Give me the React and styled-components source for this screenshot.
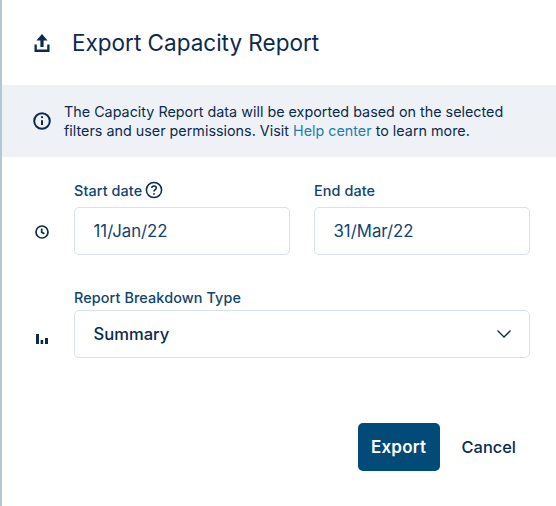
import React from "react";
import styled, { createGlobalStyle } from "styled-components";

const Global = createGlobalStyle`
  html, body { margin: 0; padding: 0; background: #fff; }
  body { font-family: Inter, "Liberation Sans", sans-serif; -webkit-font-smoothing: antialiased; }
`;

const Dialog = styled.div`
  width: 556px; height: 506px; box-sizing: border-box; overflow: hidden;
  background: #fff; border-left: 2px solid #b6c5d3;
  display: flex; flex-direction: column;
`;
const Header = styled.header`
  height: 85px; display: flex; align-items: center; gap: 21px; padding-left: 31px; box-sizing: border-box;
`;
const Title = styled.h1`
  margin: 0; font-size: 22.5px; font-weight: 400; color: #0d2a4d; letter-spacing: 0; line-height: 30px;
`;
const Banner = styled.div`
  height: 72px; background: #eef2f7; display: flex; align-items: center; gap: 12px; padding-left: 30px; box-sizing: border-box;
`;
const BannerText = styled.p`
  margin: 0; font-size: 14.35px; line-height: 19px; color: #0d2a4d; width: 480px;
`;
const HelpLink = styled.a`
  color: #1a7fb0; text-decoration: none;
`;
const Form = styled.div`
  display: flex; flex-direction: column; padding: 23px 0 0 30px; gap: 32px;
`;
const Row = styled.div`
  display: flex; align-items: flex-end; gap: 22px;
`;
const IconCell = styled.div`
  width: 20px; height: 47px; flex: none; display: flex; align-items: center; justify-content: center;
  padding-top: ${p => p.$shift || 0}px; box-sizing: border-box;
`;
const Fields = styled.div`
  display: flex; gap: 24px;
`;
const Field = styled.div`
  display: flex; flex-direction: column;
`;
const Label = styled.label`
  display: flex; align-items: center; gap: 3px; height: 20px; margin-bottom: ${p => p.$tight ? 3 : 7}px;
  font-size: 14.4px; font-weight: 500; color: #0f4470; letter-spacing: 0.1px;
`;
const Input = styled.div`
  width: ${p => p.$w}px; height: 48px; box-sizing: border-box;
  border: 1.5px solid #d8e2ec; border-radius: 5px; background: #fff;
  display: flex; align-items: center; justify-content: space-between; padding: 0 17px 0 18.5px;
  font-size: ${p => p.$strong ? 16.6 : 16.8}px; font-weight: ${p => p.$strong ? 500 : 400}; color: ${p => p.$strong ? "#0d2a4d" : "#0f4470"};
`;
const Footer = styled.div`
  display: flex; justify-content: flex-end; align-items: center; gap: 22px; padding: 65px 40px 0 0;
`;
const ExportButton = styled.button`
  width: 82px; height: 48px; border: 0; border-radius: 5px; background: #024a78; color: #fff; padding: 0;
  font: 600 17px Inter, "Liberation Sans", sans-serif; letter-spacing: 0.2px;
`;
const CancelButton = styled.button`
  border: 0; background: none; padding: 0; color: #0d2a4d;
  font: 500 16.4px Inter, "Liberation Sans", sans-serif;
`;

const UploadIcon = () => (
  <svg width="18" height="20" viewBox="0 0 18 20" fill="#0d2a4d">
    <path d="M9 1 L14.6 7.4 H10.6 V14 H7.4 V7.4 H3.4 Z" />
    <path d="M1.5 11.5 H3.8 V16.4 H14.2 V11.5 H16.5 V19 H1.5 Z" />
  </svg>
);
const InfoIcon = () => (
  <svg width="20" height="20" viewBox="0 0 20 20" fill="none" stroke="#0d2a4d" strokeWidth="2">
    <circle cx="10" cy="10" r="7.8" />
    <path d="M10 9.2 V14" />
    <circle cx="10" cy="6.2" r="1.1" fill="#0d2a4d" stroke="none" />
  </svg>
);
const ClockIcon = () => (
  <svg width="16" height="16" viewBox="0 0 16 16" fill="none" stroke="#0d2a4d" strokeWidth="1.7">
    <circle cx="8" cy="8" r="6" />
    <path d="M7.7 4.6 V8.3 L10.4 9.8" />
  </svg>
);
const BarsIcon = () => (
  <svg width="14" height="14" viewBox="0 0 14 14" fill="#0d2a4d">
    <rect x="1" y="2" width="3" height="10" />
    <rect x="5.6" y="8" width="2.6" height="4" />
    <rect x="10" y="6" width="3" height="6" />
  </svg>
);
const HelpIcon = () => (
  <svg width="18" height="18" viewBox="0 0 18 18" fill="none" stroke="#0d2a4d" strokeWidth="1.5">
    <circle cx="9" cy="9" r="7.6" />
    <path d="M6.8 7.1 C6.8 5.7 7.8 5 9 5 C10.3 5 11.3 5.8 11.3 7 C11.3 8.6 9 8.7 9 10.5" />
    <circle cx="9" cy="12.9" r="0.95" fill="#0d2a4d" stroke="none" />
  </svg>
);
const ChevronIcon = () => (
  <svg width="16" height="10" viewBox="0 0 16 10" fill="none" stroke="#0d2a4d" strokeWidth="1.3">
    <path d="M1.5 1.5 L8 8 L14.5 1.5" />
  </svg>
);

export default function App() {
  return (
    <>
      <Global />
      <Dialog>
        <Header>
          <UploadIcon />
          <Title>Export Capacity Report</Title>
        </Header>
        <Banner>
          <InfoIcon />
          <BannerText>
            The Capacity Report data will be exported based on the selected filters and user permissions. Visit <HelpLink href="#">Help center</HelpLink> to learn more.
          </BannerText>
        </Banner>
        <Form>
          <Row>
            <IconCell><ClockIcon /></IconCell>
            <Fields>
              <Field>
                <Label>Start date <HelpIcon /></Label>
                <Input $w={216}>11/Jan/22</Input>
              </Field>
              <Field>
                <Label>End date</Label>
                <Input $w={216}>31/Mar/22</Input>
              </Field>
            </Fields>
          </Row>
          <Row>
            <IconCell $shift={8}><BarsIcon /></IconCell>
            <Field>
              <Label $tight>Report Breakdown Type</Label>
              <Input $w={456} $strong>Summary<ChevronIcon /></Input>
            </Field>
          </Row>
        </Form>
        <Footer>
          <ExportButton>Export</ExportButton>
          <CancelButton>Cancel</CancelButton>
        </Footer>
      </Dialog>
    </>
  );
}
